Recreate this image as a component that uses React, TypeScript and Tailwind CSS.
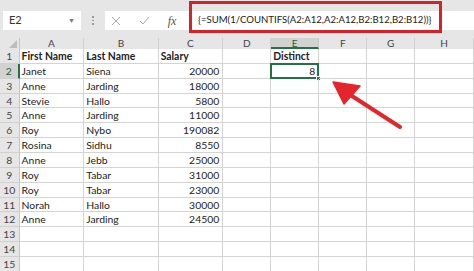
const cols = [20, 66, 76, 66, 49, 49, 49, 49, 60];
const letters = ["A", "B", "C", "D", "E", "F", "G", "H"];

type Row = { a?: string; b?: string; c?: string; e?: string; bold?: boolean };

const rows: Row[] = [
  { a: "First Name", b: "Last Name", c: "Salary", e: "Distinct", bold: true },
  { a: "Janet", b: "Siena", c: "20000", e: "8" },
  { a: "Anne", b: "Jarding", c: "18000" },
  { a: "Stevie", b: "Hallo", c: "5800" },
  { a: "Anne", b: "Jarding", c: "11000" },
  { a: "Roy", b: "Nybo", c: "190082" },
  { a: "Rosina", b: "Sidhu", c: "8550" },
  { a: "Anne", b: "Jebb", c: "25000" },
  { a: "Roy", b: "Tabar", c: "31000" },
  { a: "Roy", b: "Tabar", c: "23000" },
  { a: "Norah", b: "Hallo", c: "30000" },
  { a: "Anne", b: "Jarding", c: "24500" },
  {},
  {},
  {},
];

export default function App() {
  return (
    <main className="relative h-[271px] w-[474px] overflow-hidden bg-white font-['Lato',sans-serif] text-[10.4px] text-[#222]">
      {/* formula bar */}
      <div className="flex h-[38px] items-start bg-[#e6e6e6] pt-[11px]">
        <div className="ml-[3px] flex h-[19px] w-[78px] items-center justify-between bg-white pl-[6px] pr-[6px] text-[11px] text-[#333]">
          <span>E2</span>
          <span className="text-[7px] text-[#777]">▼</span>
        </div>
        <div className="flex h-[19px] w-[24px] flex-col items-center justify-center gap-[2px]">
          <span className="h-[1.5px] w-[1.5px] bg-[#999]" />
          <span className="h-[1.5px] w-[1.5px] bg-[#999]" />
          <span className="h-[1.5px] w-[1.5px] bg-[#999]" />
        </div>
        <div className="flex h-[19px] flex-1 items-center bg-white">
          <div className="flex w-[22px] justify-center">
            <svg width="10" height="10" viewBox="0 0 10 10">
              <path d="M1 1 L9 9 M9 1 L1 9" stroke="#a8a8a8" strokeWidth="1" />
            </svg>
          </div>
          <div className="ml-[5px] flex w-[24px] justify-center">
            <svg width="11" height="9" viewBox="0 0 11 9">
              <path d="M1 5 L4 8 L10 1" stroke="#a8a8a8" strokeWidth="1" fill="none" />
            </svg>
          </div>
          <div className="ml-[4px] w-[24px] text-center font-['Liberation_Serif',serif] text-[12px] italic text-[#555]">
            fx
          </div>
          <div className="ml-[1px] whitespace-nowrap pl-[13px] text-[9.6px] text-[#222]">
            {"{=SUM(1/COUNTIFS(A2:A12,A2:A12,B2:B12,B2:B12))}"}
          </div>
        </div>
      </div>

      {/* column headers */}
      <div className="flex h-[11px] bg-[#e6e6e6] text-[10px] leading-[11px] text-[#444]">
        <div className="relative h-full border-r border-[#c6c6c6]" style={{ width: cols[0] }}>
          <svg className="absolute bottom-[1px] right-[2px]" width="8" height="8" viewBox="0 0 8 8">
            <path d="M8 0 L8 8 L0 8 Z" fill="#bdbdbd" />
          </svg>
        </div>
        {letters.map((l, i) => (
          <div
            key={l}
            className={
              l === "E"
                ? "border-b-2 border-r border-b-[#217346] border-r-[#c6c6c6] bg-[#d2d2d2] text-center text-[#1f5f3a]"
                : "border-r border-[#d0d0d0] text-center"
            }
            style={{ width: cols[i + 1] }}
          >
            {l}
          </div>
        ))}
      </div>

      {/* grid rows */}
      {rows.map((r, ri) => (
        <div key={ri} className={`flex h-[14.86px] items-center leading-[14px] ${r.bold ? "font-bold" : ""}`}>
          <div
            className={
              ri === 1
                ? "h-full border-b border-r-2 border-b-[#d0d0d0] border-r-[#217346] bg-[#d2d2d2] text-center font-normal text-[#1f5f3a]"
                : "h-full border-b border-r border-b-[#d0d0d0] border-r-[#c6c6c6] bg-[#e6e6e6] text-center font-normal text-[#444]"
            }
            style={{ width: cols[0] }}
          >
            {ri + 1}
          </div>
          <Cell w={cols[1]} text={r.a} />
          <Cell w={cols[2]} text={r.b} />
          <Cell w={cols[3]} text={r.c} right={!r.bold} />
          <Cell w={cols[4]} />
          <Cell w={cols[5]} text={r.e} right={!r.bold} active={ri === 1} />
          <Cell w={cols[6]} />
          <Cell w={cols[7]} />
          <Cell w={cols[8]} />
        </div>
      ))}

      {/* annotation box */}
      <div className="absolute left-[189px] top-[1px] h-[32px] w-[253px] border-[3px] border-[#d2232a]" />

      {/* annotation arrow */}
      <svg className="absolute left-0 top-0" width="474" height="271" viewBox="0 0 474 271">
        <path d="M400 127 L352 96" stroke="#e4252b" strokeWidth="4" strokeLinecap="round" />
        <path d="M333 82 L360 86 L344 104 Z" fill="#e4252b" stroke="#e4252b" strokeWidth="1.5" strokeLinejoin="round" />
      </svg>
    </main>
  );
}

function Cell({ w, text, right, active }: { w: number; text?: string; right?: boolean; active?: boolean }) {
  return (
    <div
      className={`relative h-full whitespace-nowrap border-b border-r border-[#d4d4d4] ${right ? "pr-[3px] text-right" : "pl-[2px]"}`}
      style={{ width: w }}
    >
      {text}
      {active && (
        <>
          <div className="absolute -left-[1px] -top-[1px] bottom-[-1px] right-[-1px] border-2 border-[#217346]" />
          <div className="absolute -bottom-[3px] -right-[3px] h-[5px] w-[5px] border border-white bg-[#217346]" />
        </>
      )}
    </div>
  );
}
